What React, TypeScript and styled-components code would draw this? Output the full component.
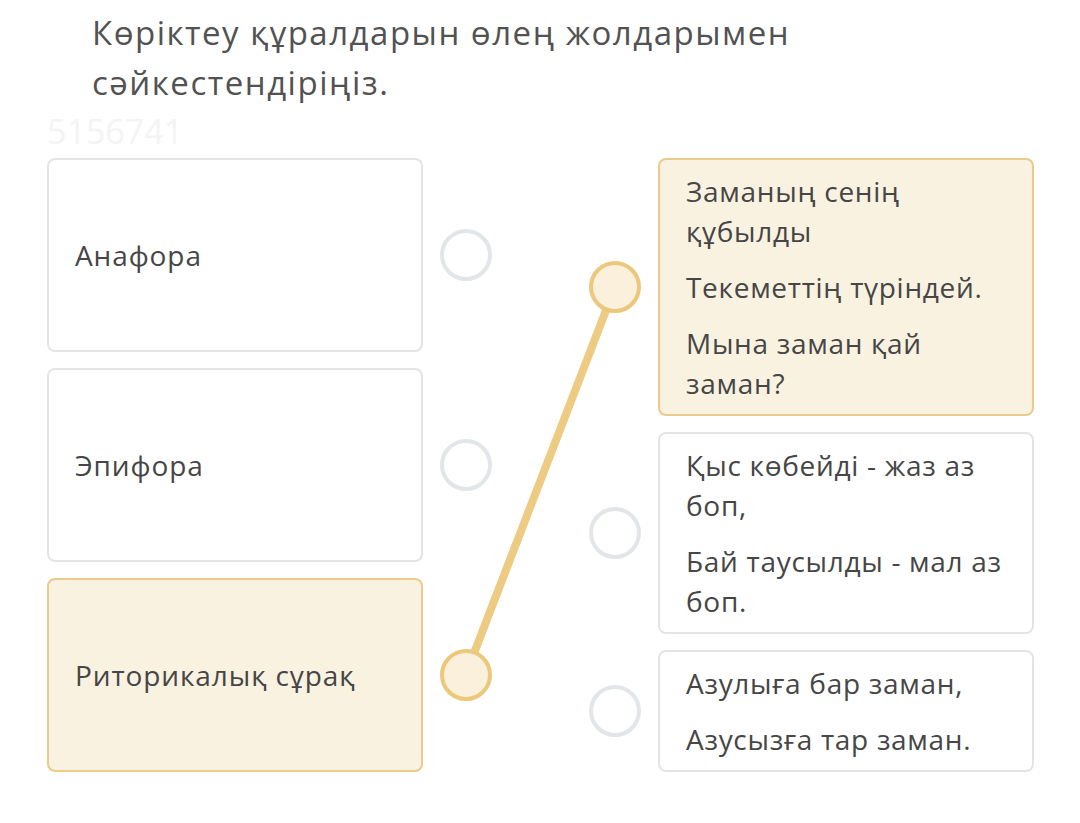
import React from "react";
import styled, { createGlobalStyle } from "styled-components";

const GlobalStyle = createGlobalStyle`
  html, body {
    margin: 0;
    padding: 0;
    background: #ffffff;
  }
  body {
    font-family: "Open Sans", "Noto Sans", sans-serif;
  }
`;

type Prompt = { id: string; text: string };
type Answer = { id: string; lines: string[] };

const prompts: Prompt[] = [
  { id: "a", text: "Анафора" },
  { id: "b", text: "Эпифора" },
  { id: "c", text: "Риторикалық сұрақ" }
];

const answers: Answer[] = [
  {
    id: "x",
    lines: ["Заманың сенің құбылды", "Текеметтің түріндей.", "Мына заман қай заман?"]
  },
  {
    id: "y",
    lines: ["Қыс көбейді - жаз аз боп,", "Бай таусылды - мал аз боп."]
  },
  {
    id: "z",
    lines: ["Азулыға бар заман,", "Азусызға тар заман."]
  }
];

const selectedPrompt = "c";
const selectedAnswer = "x";

const App = () => {
  return (
    <Page>
      <GlobalStyle />
      <Title>
        Көріктеу құралдарын өлең жолдарымен
        <br />
        сәйкестендіріңіз.
      </Title>
      <Watermark>5156741</Watermark>
      <Board>
        <Column>
          {prompts.map((p) => (
            <PromptRow key={p.id}>
              <PromptCard $active={p.id === selectedPrompt}>{p.text}</PromptCard>
              <Dot $active={p.id === selectedPrompt} />
            </PromptRow>
          ))}
        </Column>
        <Column>
          {answers.map((a) => (
            <AnswerRow key={a.id}>
              <Dot $active={a.id === selectedAnswer} />
              <AnswerCard $active={a.id === selectedAnswer}>
                {a.lines.map((l, i) => (
                  <Verse key={i}>{l}</Verse>
                ))}
              </AnswerCard>
            </AnswerRow>
          ))}
        </Column>
        {/* matched pair connector */}
        <Link viewBox="0 0 987 614">
          <line
            x1="419"
            y1="516"
            x2="568"
            y2="129"
            stroke="#eecb82"
            strokeWidth="8"
            strokeLinecap="round"
          />
        </Link>
      </Board>
    </Page>
  );
};

const Page = styled.div`
  width: 1080px;
  height: 823px;
  box-sizing: border-box;
  padding: 8px 46px 0 47px;
  overflow: hidden;
`;

const Title = styled.h1`
  margin: 0 0 0 45px;
  font-family: "Open Sans", sans-serif;
  font-weight: 400;
  font-size: 33px;
  line-height: 50px;
  letter-spacing: 1.5px;
  color: #525252;
`;

const Watermark = styled.div`
  font-family: "Open Sans", sans-serif;
  font-size: 34px;
  line-height: 46px;
  color: #f4f4f4;
  margin-bottom: 4px;
`;

const Board = styled.div`
  position: relative;
  display: flex;
  justify-content: space-between;
  width: 987px;
`;

const Column = styled.div`
  display: flex;
  flex-direction: column;
  gap: 16px;
  width: 445px;
  position: relative;
  z-index: 1;
`;

const PromptRow = styled.div`
  display: flex;
  align-items: center;
  gap: 17px;
`;

const AnswerRow = styled.div`
  display: flex;
  align-items: center;
  gap: 17px;
`;

const PromptCard = styled.div<{ $active?: boolean }>`
  box-sizing: border-box;
  width: 376px;
  height: 194px;
  display: flex;
  align-items: center;
  padding: 0 26px;
  border: 2px solid ${(p) => (p.$active ? "#eacb8a" : "#e4e4e4")};
  border-radius: 8px;
  background: ${(p) => (p.$active ? "#faf2e1" : "#ffffff")};
  font-size: 28px;
  line-height: 40px;
  letter-spacing: 0.9px;
  color: #464646;
`;

const AnswerCard = styled.div<{ $active?: boolean }>`
  box-sizing: border-box;
  width: 376px;
  padding: 11px 16px 11px 26px;
  border: 2px solid ${(p) => (p.$active ? "#eacb8a" : "#e4e4e4")};
  border-radius: 8px;
  background: ${(p) => (p.$active ? "#faf2e1" : "#ffffff")};
  display: flex;
  flex-direction: column;
  gap: 16px;
`;

const Verse = styled.p`
  margin: 0;
  font-size: 28px;
  line-height: 40px;
  letter-spacing: 0.7px;
  color: #464646;
`;

const Dot = styled.div<{ $active?: boolean }>`
  box-sizing: border-box;
  flex: none;
  width: 52px;
  height: 52px;
  border-radius: 50%;
  border: 4px solid ${(p) => (p.$active ? "#ebc87c" : "#e2e6e9")};
  background: ${(p) => (p.$active ? "#fbf0dc" : "#ffffff")};
`;

const Link = styled.svg`
  position: absolute;
  left: 0;
  top: 0;
  width: 987px;
  height: 614px;
  pointer-events: none;
  z-index: 0;
`;

export default App;
